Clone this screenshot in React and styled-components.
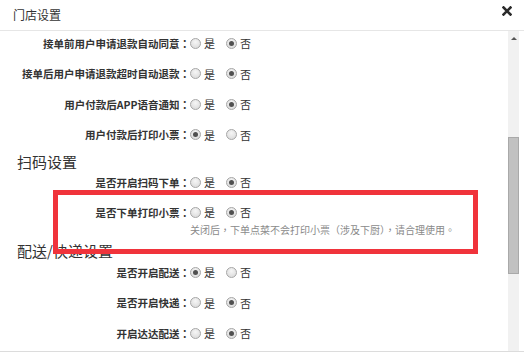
import React from "react";
import styled, { createGlobalStyle } from "styled-components";

const GlobalStyle = createGlobalStyle`
  html, body {
    margin: 0;
    padding: 0;
    background: #ffffff;
  }
  body {
    font-family: "Noto Sans CJK SC", "Liberation Sans", sans-serif;
    color: #333;
  }
`;

const Dialog = styled.div`
  width: 524px;
  height: 351px;
  background: #fff;
  border-bottom: 1px solid #dcdcdc;
  display: flex;
  flex-direction: column;
  overflow: hidden;
`;

const Header = styled.div`
  height: 30px;
  flex: none;
  display: flex;
  align-items: center;
  padding: 0 13px;
  border-bottom: 1px solid #e6e6e6;
`;

const Title = styled.span`
  font-size: 12px;
  color: #333;
  margin-top: -2px;
`;

const Close = styled.button`
  margin-left: auto;
  align-self: flex-start;
  margin-top: 6px;
  margin-right: -1px;
  padding: 0;
  border: none;
  background: none;
  width: 10px;
  height: 10px;
  display: flex;
`;

const Body = styled.div`
  flex: 1;
  display: flex;
  min-height: 0;
`;

const Content = styled.div`
  flex: 1;
  padding-top: 2px;
  overflow: hidden;
`;

const Scrollbar = styled.div`
  width: 11px;
  margin-right: 5px;
  background: #f1f1f1;
  display: flex;
  flex-direction: column;
  align-items: stretch;
`;

const ScrollArrow = styled.div`
  height: 14px;
  display: flex;
  align-items: center;
  justify-content: center;
  &::before {
    content: "";
    border-left: 3px solid transparent;
    border-right: 3px solid transparent;
    border-bottom: 3px solid #555;
  }
`;

const ScrollThumb = styled.div`
  margin-top: 92px;
  height: 137px;
  background: #c1c1c1;
  border: 1px solid #a9a9a9;
  box-sizing: border-box;
`;

const SectionTitle = styled.div`
  height: 20px;
  line-height: 20px;
  font-size: 15px;
  color: #333;
  padding-left: 17px;
  margin-top: ${(p) => p.$top || 0}px;
`;

const Row = styled.div`
  height: 20px;
  display: flex;
  align-items: center;
  margin-top: ${(p) => (p.$top === undefined ? 10.5 : p.$top)}px;
`;

const Label = styled.label`
  width: 190px;
  flex: none;
  text-align: right;
  font-size: 10.5px;
  font-weight: bold;
  color: #333;
  white-space: nowrap;
`;

const Colon = styled.span`
  font-family: "Noto Sans CJK TC", sans-serif;
`;

const Option = styled.label`
  display: flex;
  align-items: center;
  font-size: 11px;
  color: #333;
  margin-right: 11px;
`;

const Radio = styled.input.attrs({ type: "radio" })`
  appearance: none;
  margin: 0 3px 0 0;
  width: 11px;
  height: 11px;
  border-radius: 50%;
  border: 1px solid #a6a6a6;
  background: radial-gradient(circle at 50% 35%, #f6f6f6, #d6d6d6);
  box-sizing: border-box;
  display: grid;
  place-items: center;
  &:checked::after {
    content: "";
    width: 5px;
    height: 5px;
    border-radius: 50%;
    background: #505050;
  }
`;

const Highlight = styled.div`
  position: relative;
  margin-top: 10px;
`;

const Note = styled.div`
  margin-top: 1px;
  padding-left: 190px;
  height: 14px;
  line-height: 14px;
  font-size: 10px;
  color: #8a8a8a;
  white-space: nowrap;
  font-family: "Noto Sans CJK TC", "Noto Sans CJK SC", sans-serif;
`;

const RedFrame = styled.div`
  position: absolute;
  left: 53px;
  top: -12px;
  width: 425px;
  height: 64px;
  border: 5px solid #f0333b;
  box-sizing: border-box;
  pointer-events: none;
`;

function Setting({ name, label, value, top }) {
  return (
    <Row $top={top}>
      <Label>
        {label}
        <Colon>：</Colon>
      </Label>
      <Option>
        <Radio name={name} defaultChecked={value === "yes"} />是
      </Option>
      <Option>
        <Radio name={name} defaultChecked={value === "no"} />否
      </Option>
    </Row>
  );
}

export default function App() {
  return (
    <>
      <GlobalStyle />
      <Dialog>
        <Header>
          <Title>门店设置</Title>
          <Close aria-label="关闭">
            <svg width="10" height="10" viewBox="0 0 10 10">
              <path d="M1.5 1.5 L8.5 8.5 M8.5 1.5 L1.5 8.5" stroke="#2b2b2b" strokeWidth="2.6" strokeLinecap="square" />
            </svg>
          </Close>
        </Header>
        <Body>
          <Content>
            <Setting name="r1" label="接单前用户申请退款自动同意" value="no" top={0} />
            <Setting name="r2" label="接单后用户申请退款超时自动退款" value="no" />
            <Setting name="r3" label="用户付款后APP语音通知" value="no" />
            <Setting name="r4" label="用户付款后打印小票" value="yes" />

            <SectionTitle $top={7.5}>扫码设置</SectionTitle>
            <Setting name="r5" label="是否开启扫码下单" value="no" top={0} />
            <Highlight>
              <Setting name="r6" label="是否下单打印小票" value="no" top={0} />
              <Note>关闭后，下单点菜不会打印小票（涉及下厨），请合理使用。</Note>
              <RedFrame />
            </Highlight>

            <SectionTitle $top={4}>配送/快递设置</SectionTitle>
            <Setting name="r7" label="是否开启配送" value="yes" top={1} />
            <Setting name="r8" label="是否开启快递" value="no" />
            <Setting name="r9" label="开启达达配送" value="no" />
          </Content>
          <Scrollbar>
            <ScrollArrow />
            <ScrollThumb />
          </Scrollbar>
        </Body>
      </Dialog>
    </>
  );
}
